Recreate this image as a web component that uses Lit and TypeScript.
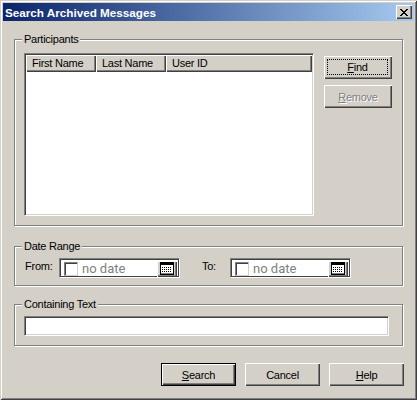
import { LitElement, html, css, svg } from "lit";
import { customElement } from "lit/decorators.js";

const calendar = html`<svg class="cal-icon" width="14" height="13" viewBox="0 0 14 13" shape-rendering="crispEdges">
  <rect x="0.5" y="0.5" width="13" height="12" fill="#fff" stroke="#000"/>
  <rect x="1" y="1" width="12" height="2" fill="#000"/>
  ${[5, 7, 9].map((y) =>
    [2, 4, 6, 8, 10].map((x) => svg`<rect x="${x}" y="${y}" width="1" height="1" fill="#000"/>`)
  )}
  <rect x="1" y="11" width="12" height="1" fill="#808080"/>
</svg>`;

@customElement("app-root")
export class AppRoot extends LitElement {
  static styles = css`
    :host {
      display: block;
      width: 417px;
      height: 400px;
      font-family: "Liberation Sans", Arial, sans-serif;
      font-size: 11px;
      letter-spacing: -0.25px;
      color: #000;
    }
    * { box-sizing: border-box; }
    .window {
      width: 417px;
      height: 400px;
      background: #d4d0c8;
      padding: 3px;
      display: flex;
      flex-direction: column;
      box-shadow: inset 1px 1px #d4d0c8, inset -1px -1px #404040,
        inset 2px 2px #fff, inset -2px -2px #808080;
    }
    .titlebar {
      height: 18px;
      flex: none;
      background: linear-gradient(90deg, #0a246a, #a6caf0);
      display: flex;
      align-items: center;
      justify-content: space-between;
      padding: 0 2px;
      color: #fff;
      font-weight: bold;
      font-size: 11.7px;
      letter-spacing: 0;
    }
    .close {
      width: 16px;
      height: 14px;
      background: #d4d0c8;
      display: flex;
      align-items: center;
      justify-content: center;
      box-shadow: inset 1px 1px #fff, inset -1px -1px #404040, inset -2px -2px #808080;
    }
    .content {
      flex: 1;
      display: flex;
      flex-direction: column;
      padding: 18px 10px 0 11px;
    }
    .group {
      position: relative;
      border: 1px solid #808080;
      box-shadow: 1px 1px #fff, inset 1px 1px #fff;
      width: 389px;
      margin-right: 1px;
    }
    .legend {
      position: absolute;
      top: -8px;
      left: 7px;
      padding: 0 2px;
      background: #d4d0c8;
      line-height: 14px;
    }
    .participants {
      height: 187px;
      padding: 13px 9px 0;
      display: flex;
      gap: 10px;
      margin-bottom: 20px;
    }
    .list {
      width: 290px;
      height: 163px;
      background: #fff;
      border: 1px solid;
      border-color: #808080 #fff #fff #808080;
      box-shadow: inset 1px 1px #404040, inset -1px -1px #d4d0c8;
      padding: 1px;
      display: flex;
      flex-direction: column;
    }
    .head {
      height: 17px;
      display: flex;
      background: #d4d0c8;
    }
    .col {
      width: 70px;
      padding-left: 6px;
      line-height: 16px;
      box-shadow: inset 1px 1px #fff, inset -1px -1px #404040, inset -2px -2px #808080;
    }
    .col.grow { flex: 1; }
    .side {
      display: flex;
      flex-direction: column;
      gap: 6px;
      padding-top: 3px;
    }
    .btn {
      width: 68px;
      height: 23px;
      background: #d4d0c8;
      display: flex;
      align-items: center;
      justify-content: center;
      box-shadow: inset 1px 1px #fff, inset -1px -1px #404040, inset -2px -2px #808080;
    }
    .focus {
      align-self: stretch;
      flex: 1;
      margin: 3px 4px 4px 3px;
      border: 1px dotted #000;
      display: flex;
      align-items: center;
      justify-content: center;
    }
    .disabled {
      color: #808080;
      text-shadow: 1px 1px #fff;
    }
    .daterange {
      height: 40px;
      margin-bottom: 18px;
      padding: 11px 9px 0 10px;
      display: flex;
      align-items: flex-start;
    }
    .lbl { line-height: 16px; }
    .from-lbl { width: 34px; }
    .to-lbl { width: 28px; margin-left: 22px; }
    .date {
      width: 121px;
      height: 20px;
      background: #fff;
      border: 1px solid;
      border-color: #808080 #fff #fff #808080;
      box-shadow: inset 1px 1px #404040, inset -1px -1px #404040;
      padding: 2px 2px 1px 4px;
      display: flex;
      align-items: center;
    }
    .check {
      width: 14px;
      height: 14px;
      flex: none;
      background: #fff;
      border: 1px solid;
      border-color: #808080 #d4d0c8 #d4d0c8 #808080;
      box-shadow: inset 1px 1px #404040;
    }
    .nodate {
      flex: 1;
      margin-left: 4px;
      color: #808080;
      font-family: Roboto, "Liberation Sans", sans-serif;
      font-size: 13px;
      letter-spacing: 0;
      line-height: 16px;
    }
    .calbtn {
      width: 20px;
      height: 16px;
      flex: none;
      background: #d4d0c8;
      display: flex;
      align-items: center;
      justify-content: center;
      box-shadow: inset 1px 1px #fff, inset -1px -1px #404040, inset -2px -2px #808080;
    }
    .text {
      height: 42px;
      padding: 11px 9px 0;
    }
    .field {
      width: 365px;
      height: 20px;
      background: #fff;
      border: 1px solid;
      border-color: #808080 #fff #fff #808080;
      box-shadow: inset 1px 1px #404040, inset -1px -1px #d4d0c8;
    }
    .footer {
      display: flex;
      justify-content: flex-end;
      gap: 9px;
      margin-top: 17px;
    }
    .footer .btn { width: 75px; }
    .default {
      box-shadow: inset 0 0 0 1px #000, inset 2px 2px #fff, inset -2px -2px #404040, inset -3px -3px #808080;
    }
    u { text-decoration-thickness: 1px; text-underline-offset: 1px; }
  `;

  render() {
    const dateBox = html`<div class="date">
      <div class="check"></div>
      <div class="nodate">no date</div>
      <div class="calbtn">${calendar}</div>
    </div>`;
    return html`<div class="window">
      <div class="titlebar">
        <span>Search Archived Messages</span>
        <div class="close">
          <svg width="8" height="7" viewBox="0 0 8 7" shape-rendering="crispEdges">
            <path d="M0 0h2v1h1v1h2V1h1V0h2v1H7v1H6v1H5v1h1v1h1v1h1v1H6V6H5V5H3v1H2v1H0V6h1V5h1V4h1V3H2V2H1V1H0z" fill="#000"/>
          </svg>
        </div>
      </div>
      <div class="content">
        <div class="group participants">
          <div class="legend">Participants</div>
          <div class="list">
            <div class="head">
              <div class="col">First Name</div>
              <div class="col">Last Name</div>
              <div class="col grow">User ID</div>
            </div>
          </div>
          <div class="side">
            <div class="btn"><span class="focus"><span><u>F</u>ind</span></span></div>
            <div class="btn disabled"><span><u>R</u>emove</span></div>
          </div>
        </div>
        <div class="group daterange">
          <div class="legend">Date Range</div>
          <div class="lbl from-lbl">From:</div>
          ${dateBox}
          <div class="lbl to-lbl">To:</div>
          ${dateBox}
        </div>
        <div class="group text">
          <div class="legend">Containing Text</div>
          <div class="field"></div>
        </div>
        <div class="footer">
          <div class="btn default"><span><u>S</u>earch</span></div>
          <div class="btn">Cancel</div>
          <div class="btn"><span><u>H</u>elp</span></div>
        </div>
      </div>
    </div>`;
  }
}
